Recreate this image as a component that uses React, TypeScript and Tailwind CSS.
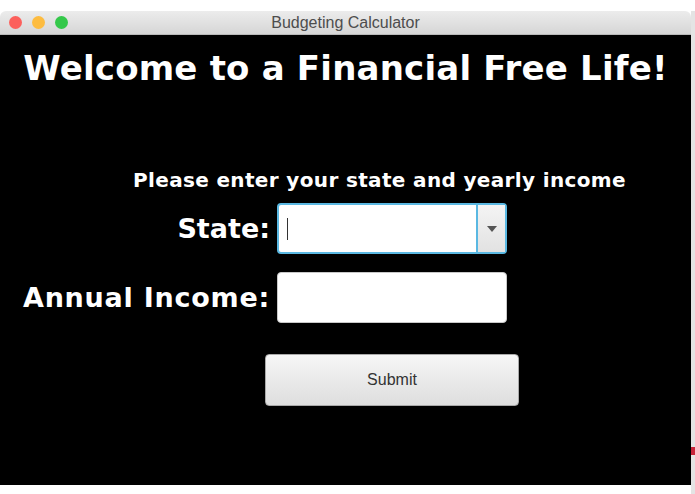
import React from "react";

/* ─── title bar ─── */
function TitleBar() {
  return (
    <div className="relative flex h-6 items-center justify-center rounded-t-md border-b border-[#b9b9b9] bg-gradient-to-b from-[#ececec] to-[#d6d6d6]">
      <div className="absolute left-[9px] top-[5px] flex gap-[10px]">
        <span className="h-[13px] w-[13px] rounded-full bg-[#fc605c]" />
        <span className="h-[13px] w-[13px] rounded-full bg-[#fdbc40]" />
        <span className="h-[13px] w-[13px] rounded-full bg-[#34c84a]" />
      </div>
      <span className="text-[16px] text-[#4d4d4d] [font-family:'Liberation_Sans',Arial,sans-serif]">Budgeting Calculator</span>
    </div>
  );
}

export default function App() {
  return (
    <div className="flex h-[494px] w-[695px] flex-col bg-white pt-[11px] [font-family:'DejaVu_Sans',Verdana,sans-serif]">
      <div className="flex flex-1">
        <div className="flex h-[474px] w-[691px] flex-col">
          <TitleBar />
          <main className="flex flex-1 flex-col bg-black text-white">
            <h1 className="mt-[12px] text-center text-[34px] font-bold leading-[42px] tracking-[0.2px]">
              Welcome to a Financial Free Life!
            </h1>

            <p className="mt-[79px] pl-[133px] text-[20px] font-bold leading-[25px] tracking-[0.35px]">
              Please enter your state and yearly income
            </p>

            <div className="mt-[10px] grid grid-cols-[270px_230px] items-center gap-x-[7px] gap-y-[18px]">
              <label className="text-right text-[27px] font-bold leading-[32px]">State:</label>
              <div className="flex h-[51px] rounded-[4px] border-2 border-[#5ab8e2] bg-white">
                <div className="flex flex-1 items-center pl-[8px]">
                  <span className="h-[22px] w-px bg-[#333]" />
                </div>
                <div className="flex w-[29px] items-center justify-center border-l-2 border-[#5ab8e2] bg-gradient-to-b from-[#f4f4f4] to-[#e2e2e2]">
                  <svg width="10" height="6" viewBox="0 0 10 6">
                    <path d="M0 0h10L5 6z" fill="#555" />
                  </svg>
                </div>
              </div>

              <label className="text-right text-[27px] font-bold leading-[32px] tracking-[0.75px]">Annual Income:</label>
              <div className="h-[51px] rounded-[4px] border border-[#c8c8c8] bg-white" />
            </div>

            <div className="mt-[31px] pl-[265px]">
              <button className="flex h-[52px] w-[254px] items-center justify-center rounded-[4px] border border-[#a9a9a9] bg-gradient-to-b from-[#f6f6f6] to-[#dedede] text-[16px] text-[#333] [font-family:'Liberation_Sans',Arial,sans-serif]">
                Submit
              </button>
            </div>
          </main>
        </div>
        <div className="flex w-[4px] flex-col bg-[#e4e4e4]">
          <div className="mt-[436px] h-[8px] bg-[#c8243a]" />
        </div>
      </div>
    </div>
  );
}
